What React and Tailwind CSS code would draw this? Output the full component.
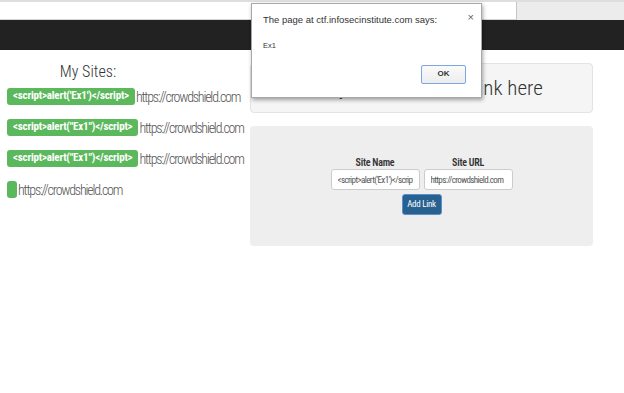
const cond = { fontFamily: "'Roboto Condensed', Roboto, sans-serif" };

function Row({ badge }) {
  return (
    <div className="flex h-[17px] items-center">
      <span
        className={`flex h-[17px] items-center rounded-[3px] bg-[#5cb85c] text-[11px] font-bold tracking-[-0.18px] whitespace-nowrap text-white ${badge ? "px-[6px]" : "w-[10px]"}`}
      >
        {badge}
      </span>
      <span className="ml-[1px] text-[14px] font-light leading-none tracking-[-1.2px] whitespace-nowrap text-[#555]">
        https://crowdshield.com
      </span>
    </div>
  );
}

function Field({ label, value }) {
  return (
    <div className="flex w-[89px] flex-col items-center">
      <span className="text-[10px] font-semibold leading-[13px] tracking-[-0.25px] text-[#333]">{label}</span>
      <input
        readOnly
        value={value}
        className="h-[21px] w-[89px] rounded-[3px] border border-[#cccccc] bg-white px-[6px] text-[9px] tracking-[-0.6px] text-[#555] outline-none"
        style={cond}
      />
    </div>
  );
}

export default function App() {
  return (
    <div className="relative h-[393px] w-[624px] overflow-hidden bg-white" style={cond}>
      {/* browser strip */}
      <div className="flex h-[20px] border-t-2 border-[#dedede]">
        <div className="w-[517px] border-r border-b border-r-[#c4c4c4] border-b-[#d4d4d4] bg-white" />
        <div className="flex-1 bg-[#ececec]" />
      </div>
      {/* navbar */}
      <div className="h-[30px] bg-[#222222]" />

      <div className="flex">
        {/* left column */}
        <div className="w-[250px] shrink-0 pl-[7px]">
          <div className="mt-[12px] w-[162px] text-center text-[16px] font-light leading-[20px] text-[#333]">
            My Sites:
          </div>
          <div className="mt-[6px] flex flex-col gap-[14px]">
            <Row badge="<script>alert('Ex1')</script>" />
            <Row badge={'<script>alert("Ex1")</script>'} />
            <Row badge={'<script>alert("Ex1")</script>'} />
            <Row badge="" />
          </div>
        </div>

        {/* right column */}
        <div className="w-[343px] shrink-0">
          <div className="mt-[13px] flex h-[50px] items-center justify-center rounded-[4px] border border-[#e3e3e3] bg-[#f5f5f5]">
            <span className="text-[21px] font-light leading-none text-[#333]">Easily add a new site link here</span>
          </div>
          <div className="mt-[13px] flex h-[120px] flex-col items-center rounded-[4px] bg-[#eeeeee] pt-[30px]">
            <div className="flex gap-[4px]">
              <Field label="Site Name" value="<script>alert('Ex1')</script>" />
              <Field label="Site URL" value="https://crowdshield.com" />
            </div>
            <div className="mt-[4px] flex h-[21px] w-[40px] items-center justify-center rounded-[3px] border border-[#5b8fd0] bg-[#286090] text-[9px] tracking-[-0.3px] text-white">
              Add Link
            </div>
          </div>
        </div>
      </div>

      {/* alert dialog */}
      <div
        className="absolute top-[3px] left-[251px] h-[95px] w-[231px] border border-[#a8a8a8] bg-white shadow-[1px_2px_4px_rgba(0,0,0,0.35)]"
        style={{ fontFamily: "'Liberation Sans', Arial, sans-serif" }}
      >
        <div className="flex items-start justify-between pt-[9px] pr-[7px] pl-[11px]">
          <span className="text-[9.5px] text-[#333]">The page at ctf.infosecinstitute.com says:</span>
          <span className="-mt-[4px] text-[11px] text-[#666]">×</span>
        </div>
        <div className="mt-[13px] pl-[11px] text-[7.5px] text-[#333]">Ex1</div>
        <div className="mt-[13px] flex justify-end pr-[15px]">
          <div className="flex h-[19px] w-[45px] items-center justify-center rounded-[2px] border border-[#7ea6e6] bg-gradient-to-b from-[#fafafa] to-[#ededed] text-[8px] font-bold text-[#333]">
            OK
          </div>
        </div>
      </div>
    </div>
  );
}
